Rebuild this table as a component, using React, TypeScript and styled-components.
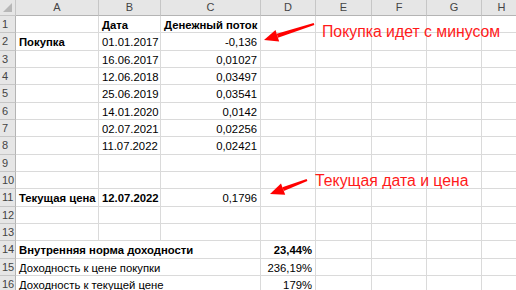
import React from 'react';
import styled, { createGlobalStyle } from 'styled-components';

const GlobalStyle = createGlobalStyle`
  html, body {
    margin: 0;
    padding: 0;
    background: #fff;
    overflow: hidden;
  }
  body {
    font-family: 'Liberation Sans', Arial, sans-serif;
  }
`;

const COLS = ['A', 'B', 'C', 'D', 'E', 'F', 'G', 'H'];
// row header + A..H
const COL_WIDTHS = [16, 83, 62, 100, 55, 56, 55, 55, 40];
const ROW_H = 17.33;

type Align = 'left' | 'right' | 'center';
type CellData = { v: string; bold?: boolean; align?: Align; span?: number };
type Row = Record<string, CellData>;

// text that runs over empty neighbours takes their columns (no gridlines under it)
const rows: Row[] = [
  { B: { v: 'Дата', bold: true }, C: { v: 'Денежный поток', bold: true } },
  {
    A: { v: 'Покупка', bold: true },
    B: { v: '01.01.2017' },
    C: { v: '-0,136', align: 'right' },
  },
  { B: { v: '16.06.2017' }, C: { v: '0,01027', align: 'right' } },
  { B: { v: '12.06.2018' }, C: { v: '0,03497', align: 'right' } },
  { B: { v: '25.06.2019' }, C: { v: '0,03541', align: 'right' } },
  { B: { v: '14.01.2020' }, C: { v: '0,0142', align: 'right' } },
  { B: { v: '02.07.2021' }, C: { v: '0,02256', align: 'right' } },
  { B: { v: '11.07.2022' }, C: { v: '0,02421', align: 'right' } },
  {},
  {},
  {
    A: { v: 'Текущая цена', bold: true },
    B: { v: '12.07.2022', bold: true },
    C: { v: '0,1796', align: 'right' },
  },
  {},
  {},
  {
    A: { v: 'Внутренняя норма доходности', bold: true, span: 3 },
    D: { v: '23,44%', bold: true, align: 'right' },
  },
  {
    A: { v: 'Доходность к цене покупки', span: 3 },
    D: { v: '236,19%', align: 'right' },
  },
  {
    A: { v: 'Доходность к текущей цене', span: 3 },
    D: { v: '179%', align: 'right' },
  },
];

const Sheet = styled.div`
  position: relative;
  width: 516px;
  height: 290px;
  overflow: hidden;
`;

const Grid = styled.div`
  display: grid;
  grid-template-columns: ${COL_WIDTHS.map((w) => `${w}px`).join(' ')};
  grid-template-rows: 16px repeat(${rows.length}, ${ROW_H}px);
`;

const Corner = styled.div`
  position: relative;
  box-sizing: border-box;
  background: #e6e6e6;
  border-right: 1px solid #c6c6c6;
  border-bottom: 1px solid #c6c6c6;

  &::after {
    content: '';
    position: absolute;
    right: 3px;
    bottom: 3px;
    width: 0;
    height: 0;
    border-left: 9px solid transparent;
    border-bottom: 9px solid #b7b7b7;
  }
`;

const ColHead = styled.div`
  box-sizing: border-box;
  background: #e6e6e6;
  border-right: 1px solid #c6c6c6;
  border-bottom: 1px solid #b4b4b4;
  color: #444;
  font-size: 11px;
  line-height: 15px;
  text-align: center;
`;

const RowHead = styled.div`
  box-sizing: border-box;
  background: #e6e6e6;
  border-right: 1px solid #b4b4b4;
  border-bottom: 1px solid #c6c6c6;
  color: #444;
  font-size: 11px;
  line-height: ${ROW_H}px;
  padding-left: 2px;
  white-space: nowrap;
  overflow: hidden;
`;

const Cell = styled.div<{ $bold?: boolean; $align?: Align; $span?: number }>`
  box-sizing: border-box;
  grid-column: span ${(p) => p.$span || 1};
  border-right: 1px solid #dadada;
  border-bottom: 1px solid #dadada;
  color: #000;
  font-size: 11.3px;
  font-weight: ${(p) => (p.$bold ? 700 : 400)};
  line-height: ${ROW_H}px;
  padding: 1px 3px 0;
  text-align: ${(p) => p.$align || 'left'};
  white-space: nowrap;
  overflow: hidden;
`;

const Note = styled.div<{ $top: number; $left: number }>`
  position: absolute;
  top: ${(p) => p.$top}px;
  left: ${(p) => p.$left}px;
  color: #ff1a1a;
  font-size: 15.8px;
  white-space: nowrap;
  z-index: 3;
`;

const Arrows = styled.svg`
  position: absolute;
  left: 0;
  top: 0;
  z-index: 2;
  pointer-events: none;
`;

const Arrow: React.FC<{ x1: number; y1: number; x2: number; y2: number }> = ({ x1, y1, x2, y2 }) => {
  const dx = x2 - x1;
  const dy = y2 - y1;
  const len = Math.hypot(dx, dy);
  const ux = dx / len;
  const uy = dy / len;
  const headLen = 14;
  const headW = 6;
  const bx = x2 - ux * headLen;
  const by = y2 - uy * headLen;
  const px = -uy;
  const py = ux;
  return (
    <g fill="#ff0000" stroke="none">
      <path
        d={`M${x1 + px},${y1 + py} L${bx + px * 2},${by + py * 2} L${bx - px * 2},${by - py * 2} L${x1 - px},${y1 - py} Z`}
      />
      <path
        d={`M${x2},${y2} L${bx + px * headW},${by + py * headW} L${bx - px * headW},${by - py * headW} Z`}
      />
    </g>
  );
};

const renderRow = (row: Row) => {
  const out: React.ReactNode[] = [];
  let skip = 0;
  COLS.forEach((c) => {
    if (skip > 0) {
      skip -= 1;
      return;
    }
    const d = row[c];
    if (d?.span) skip = d.span - 1;
    out.push(
      <Cell key={c} $bold={d?.bold} $align={d?.align} $span={d?.span}>
        {d?.v}
      </Cell>
    );
  });
  return out;
};

const App: React.FC = () => {
  return (
    <>
      <GlobalStyle />
      <Sheet>
        <Grid>
          <Corner />
          {COLS.map((c) => (
            <ColHead key={c}>{c}</ColHead>
          ))}
          {rows.map((row, i) => (
            <React.Fragment key={i}>
              <RowHead>{i + 1}</RowHead>
              {renderRow(row)}
            </React.Fragment>
          ))}
        </Grid>
        <Arrows width={516} height={290}>
          <Arrow x1={314} y1={24} x2={264} y2={40} />
          <Arrow x1={307} y1={180} x2={270} y2={194} />
        </Arrows>
        <Note $top={23} $left={322}>Покупка идет с минусом</Note>
        <Note $top={172} $left={315}>Текущая дата и цена</Note>
      </Sheet>
    </>
  );
};

export default App;
